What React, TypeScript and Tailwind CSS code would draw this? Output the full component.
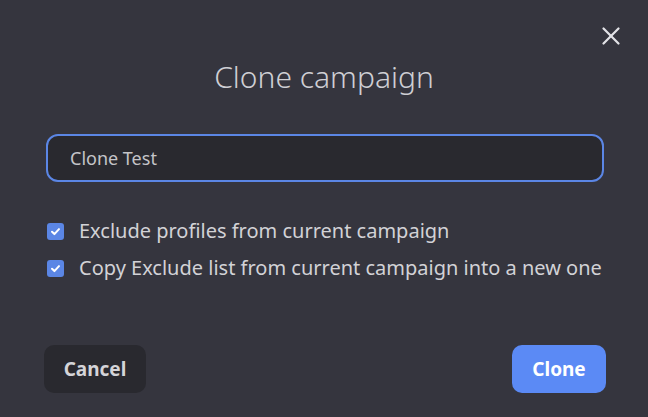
import { X } from "lucide-react";

function Check({ label }: { label: string }) {
  return (
    <label className="flex items-center gap-[15px]">
      <span className="flex h-[17px] w-[17px] items-center justify-center rounded-[3px] bg-[#5b86e5]">
        <svg viewBox="0 0 12 12" className="h-[11px] w-[11px]">
          <path
            d="M2.2 6.3 L4.8 8.8 L9.8 3.4"
            fill="none"
            stroke="white"
            strokeWidth="2.2"
            strokeLinecap="round"
            strokeLinejoin="round"
          />
        </svg>
      </span>
      <span className="text-[20px] leading-[26px] text-[#d2d2d6]">{label}</span>
    </label>
  );
}

export default function App() {
  return (
    <div
      className="relative flex h-[417px] w-[648px] flex-col bg-[#35353e] px-[44px]"
      style={{ fontFamily: '"Noto Sans", "Open Sans", sans-serif' }}
    >
      <button className="absolute right-[22px] top-[21px] text-[#e2e2e6]">
        <X className="h-[30px] w-[30px]" strokeWidth={1.8} />
      </button>

      <h2 className="mt-[56px] text-center text-[30px] font-light leading-[42px] text-[#cfcfd4]">
        Clone campaign
      </h2>

      <div className="mt-[36px] ml-[2px] flex h-[48px] items-center rounded-[12px] border-2 border-[#5b86e5] bg-[#29292f] px-[22px]">
        <span className="text-[18px] text-[#c4c4c8]">Clone Test</span>
      </div>

      <div className="mt-[36px] flex flex-col gap-[11px] pl-[3px]">
        <Check label="Exclude profiles from current campaign" />
        <Check label="Copy Exclude list from current campaign into a new one" />
      </div>

      <div className="mt-auto mb-[24px] flex items-center justify-between">
        <button className="h-[48px] w-[102px] rounded-[10px] bg-[#29292f] text-[19px] font-bold text-[#d4d4d8]">
          Cancel
        </button>
        <button className="mr-[-2px] h-[48px] w-[94px] rounded-[10px] bg-[#5b8af5] text-[19px] font-bold text-white">
          Clone
        </button>
      </div>
    </div>
  );
}
